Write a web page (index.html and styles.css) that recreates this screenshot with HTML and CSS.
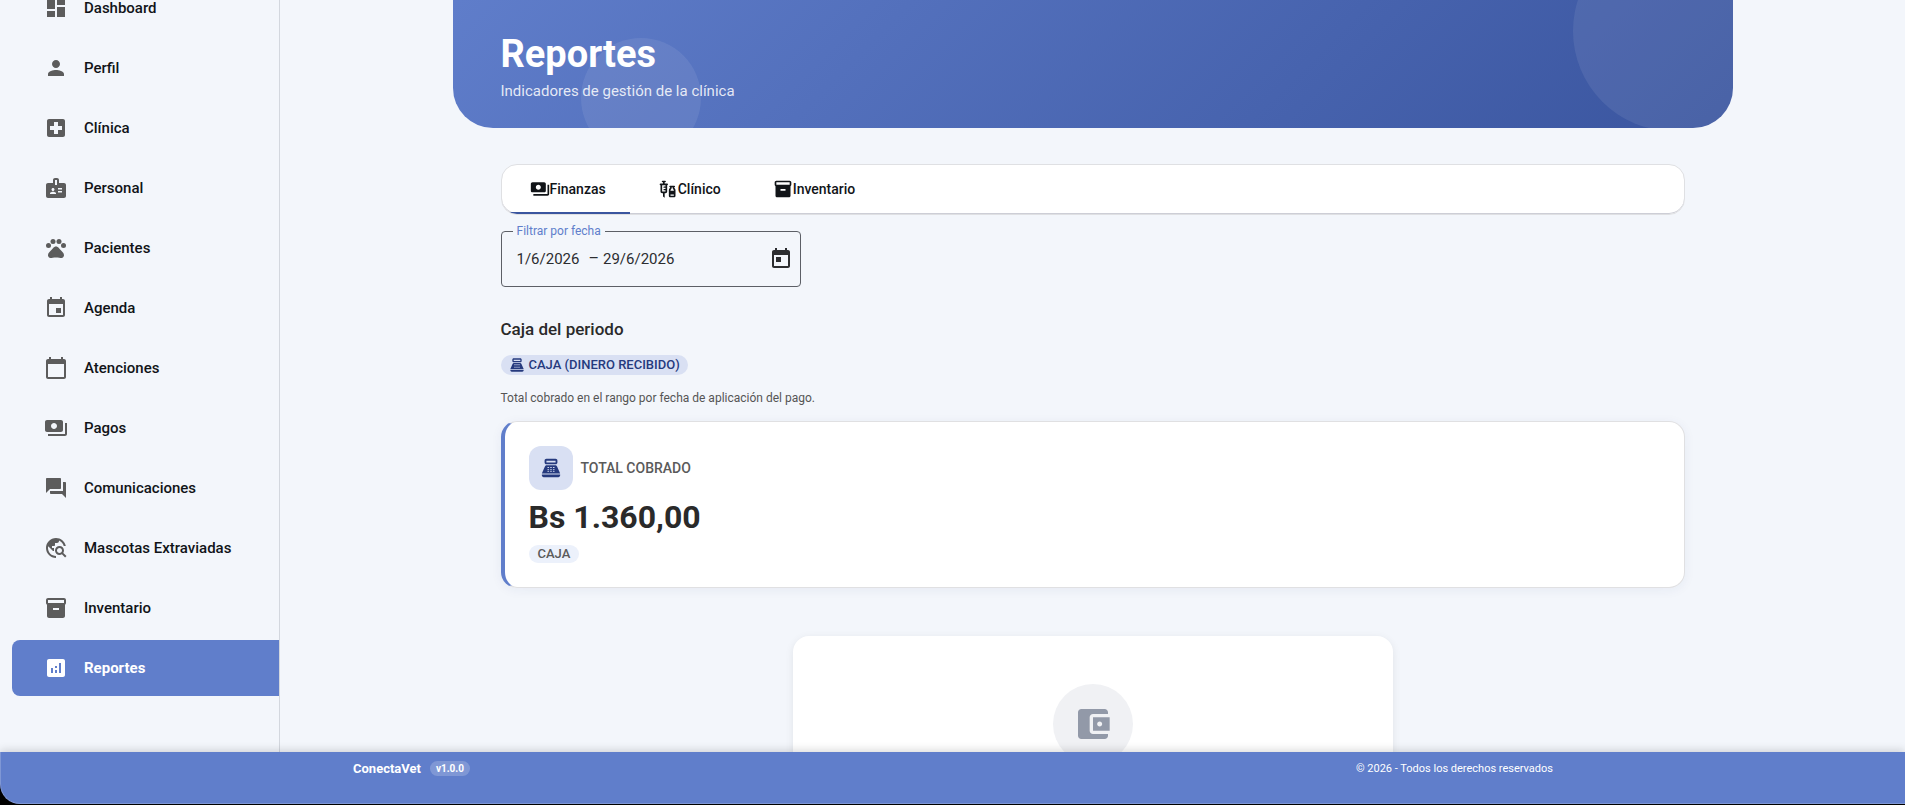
FILE: index.html
```html
<!DOCTYPE html>
<html lang="es">
<head>
<meta charset="utf-8">
<title>ConectaVet - Reportes</title>
<link rel="stylesheet" href="styles.css">
</head>
<body>
<svg class="sprite" aria-hidden="true">
  <symbol id="i-dashboard" viewBox="0 0 24 24"><path d="M3 13h8V3H3v10zm0 8h8v-6H3v6zm10 0h8V11h-8v10zm0-18v6h8V3h-8z"/></symbol>
  <symbol id="i-person" viewBox="0 0 24 24"><path d="M12 12c2.210 0 4-1.790 4-4s-1.790-4-4-4-4 1.790-4 4 1.790 4 4 4zm0 2c-2.670 0-8 1.340-8 4v2h16v-2c0-2.660-5.330-4-8-4z"/></symbol>
  <symbol id="i-hospital" viewBox="0 0 24 24"><path d="M19 3H5c-1.100 0-1.990.9-1.990 2L3 19c0 1.100.9 2 2 2h14c1.100 0 2-.9 2-2V5c0-1.100-.9-2-2-2zm-1 11h-4v4h-4v-4H6v-4h4V6h4v4h4v4z"/></symbol>
  <symbol id="i-badge" viewBox="0 0 24 24"><path fill-rule="evenodd" d="M20 7h-5V4c0-1.100-.9-2-2-2h-2c-1.100 0-2 .9-2 2v3H4c-1.100 0-2 .9-2 2v11c0 1.100.9 2 2 2h16c1.100 0 2-.9 2-2V9c0-1.100-.9-2-2-2zM9 12c.83 0 1.500.67 1.500 1.500S9.830 15 9 15s-1.500-.67-1.500-1.500S8.170 12 9 12zm3 6H6v-.75c0-1 2-1.500 3-1.500s3 .5 3 1.500V18zm1-9h-2V4h2v5zm5 7.500h-4V15h4v1.500zm0-3h-4V12h4v1.500z"/></symbol>
  <symbol id="i-pets" viewBox="0 0 24 24"><circle cx="4.500" cy="9.500" r="2.500"/><circle cx="9" cy="5.500" r="2.500"/><circle cx="15" cy="5.500" r="2.500"/><circle cx="19.500" cy="9.500" r="2.500"/><path d="M17.340 14.860c-.87-1.020-1.600-1.890-2.480-2.910-.46-.54-1.050-1.080-1.750-1.320-.11-.04-.22-.07-.33-.09-.25-.04-.52-.04-.78-.04s-.53 0-.79.05c-.11.02-.22.05-.33.09-.7.24-1.280.78-1.750 1.320-.87 1.020-1.600 1.890-2.480 2.910-1.310 1.310-2.920 2.760-2.620 4.790.29 1.020 1.020 2.030 2.330 2.320.73.15 3.060-.44 5.540-.44h.18c2.480 0 4.810.58 5.540.44 1.310-.29 2.040-1.310 2.330-2.320.31-2.040-1.300-3.490-2.610-4.800z"/></symbol>
  <symbol id="i-event" viewBox="0 0 24 24"><path d="M17 12h-5v5h5v-5zM16 1v2H8V1H6v2H5c-1.110 0-1.990.9-1.990 2L3 19c0 1.100.89 2 2 2h14c1.100 0 2-.9 2-2V5c0-1.100-.9-2-2-2h-1V1h-2zm3 18H5V8h14v11z"/></symbol>
  <symbol id="i-calendar" viewBox="0 0 24 24"><path d="M20 3h-1V1h-2v2H7V1H5v2H4c-1.100 0-2 .9-2 2v16c0 1.100.9 2 2 2h16c1.100 0 2-.9 2-2V5c0-1.100-.9-2-2-2zm0 18H4V8h16v13z"/></symbol>
  <symbol id="i-payments" viewBox="0 0 24 24"><path d="M19 14V6c0-1.100-.9-2-2-2H3c-1.100 0-2 .9-2 2v8c0 1.100.9 2 2 2h14c1.100 0 2-.9 2-2zm-9-1c-1.660 0-3-1.340-3-3s1.340-3 3-3 3 1.340 3 3-1.340 3-3 3zm13-6v11c0 1.100-.9 2-2 2H4v-2h17V7h2z"/></symbol>
  <symbol id="i-forum" viewBox="0 0 24 24"><path d="M21 6h-2v9H6v2c0 .55.45 1 1 1h11l4 4V7c0-.55-.45-1-1-1zm-4 6V3c0-.55-.45-1-1-1H3c-.55 0-1 .45-1 1v14l4-4h10c.55 0 1-.45 1-1z"/></symbol>
  <symbol id="i-travel" viewBox="0 0 24 24"><path d="M19.300 16.900c.4-.7.7-1.500.7-2.400 0-2.500-2-4.500-4.500-4.500S11 12 11 14.500s2 4.500 4.500 4.500c.9 0 1.700-.3 2.400-.7l3.200 3.200 1.400-1.400-3.200-3.200zm-3.800.1c-1.400 0-2.500-1.100-2.500-2.500s1.100-2.500 2.500-2.500 2.500 1.100 2.500 2.500-1.100 2.500-2.500 2.500zM12 20v2C6.480 22 2 17.520 2 12S6.480 2 12 2c4.840 0 8.870 3.440 9.800 8h-2.070c-.64-2.460-2.400-4.470-4.730-5.410V5c0 1.100-.9 2-2 2h-2v2c0 .55-.45 1-1 1H8v2h2v3H9l-4.790-4.790C4.080 10.790 4 11.380 4 12c0 4.410 3.590 8 8 8z"/></symbol>
  <symbol id="i-inventory" viewBox="0 0 24 24"><path d="M20 2H4c-1 0-2 .9-2 2v3.010c0 .72.43 1.340 1 1.690V20c0 1.100 1.100 2 2 2h14c.9 0 2-.9 2-2V8.700c.57-.35 1-.97 1-1.690V4c0-1.100-1-2-2-2zm-5 12H9v-2h6v2zm5-7H4V4h16v3z"/></symbol>
  <symbol id="i-analytics" viewBox="0 0 24 24"><path d="M19 3H5c-1.100 0-2 .9-2 2v14c0 1.100.9 2 2 2h14c1.100 0 2-.9 2-2V5c0-1.100-.9-2-2-2zM9 17H7v-5h2v5zm4 0h-2v-3h2v3zm0-5h-2v-2h2v2zm4 5h-2V7h2v10z"/></symbol>
  <symbol id="i-vaccines" viewBox="0 0 24 24"><path d="M11 5.500H8V4h.5c.55 0 1-.45 1-1s-.45-1-1-1h-3c-.55 0-1 .45-1 1s.45 1 1 1H6v1.500H3c-.55 0-1 .45-1 1s.45 1 1 1V15c0 1.100.9 2 2 2h1v4l2 1.500V17h1c1.100 0 2-.9 2-2V7.500c.55 0 1-.45 1-1s-.45-1-1-1zM9 9H7.250c-.41 0-.75.34-.75.750s.34.750.750.750H9V12H7.250c-.41 0-.75.340-.75.750s.34.750.750.750H9V15H5V7.500h4V9zm10.500 1.500V10c.55 0 1-.45 1-1s-.45-1-1-1h-5c-.55 0-1 .45-1 1s.45 1 1 1v.5c0 .5-1.500 1.160-1.500 3V20c0 1.100.9 2 2 2h4c1.100 0 2-.9 2-2v-6.500c0-1.840-1.500-2.500-1.500-3zm-3 0V10h1v.5c0 1.600 1.500 2 1.500 3v.5h-4v-.500c0-1 1.500-1.400 1.500-3zM15 20v-1.500h4V20h-4z"/></symbol>
  <symbol id="i-today" viewBox="0 0 24 24"><path d="M19 3h-1V1h-2v2H8V1H6v2H5c-1.110 0-1.990.9-1.990 2L3 19c0 1.100.89 2 2 2h14c1.100 0 2-.9 2-2V5c0-1.100-.9-2-2-2zm0 16H5V8h14v11zM7 10h5v5H7z"/></symbol>
  <symbol id="i-register" viewBox="0 0 24 24"><path d="M17 2H7c-1.100 0-2 .9-2 2v2c0 1.100.9 2 2 2h10c1.100 0 2-.9 2-2V4c0-1.100-.9-2-2-2zm0 4H7V4h10v2zm3 16H4c-1.100 0-2-.9-2-2v-1h20v1c0 1.100-.9 2-2 2zM18.530 10.190C18.210 9.470 17.490 9 16.700 9H7.300c-.79 0-1.510.470-1.830 1.190L2 18h20l-3.470-7.810zM9.500 16h-1c-.28 0-.5-.22-.5-.5s.22-.5.5-.5h1c.28 0 .5.22.5.5s-.22.5-.5.5zm0-2h-1c-.28 0-.5-.22-.5-.5s.22-.5.5-.5h1c.28 0 .5.22.5.5s-.22.5-.5.5zm0-2h-1c-.28 0-.5-.22-.5-.5s.22-.5.5-.5h1c.28 0 .5.22.5.5s-.22.5-.5.5zm3 4h-1c-.28 0-.5-.22-.5-.5s.22-.5.5-.5h1c.28 0 .5.22.5.5s-.22.5-.5.5zm0-2h-1c-.28 0-.5-.22-.5-.5s.22-.5.5-.5h1c.28 0 .5.22.5.5s-.22.5-.5.5zm0-2h-1c-.28 0-.5-.22-.5-.5s.22-.5.5-.5h1c.28 0 .5.22.5.5s-.22.5-.5.5zm3 4h-1c-.28 0-.5-.22-.5-.5s.22-.5.5-.5h1c.28 0 .5.22.5.5s-.22.5-.5.5zm0-2h-1c-.28 0-.5-.22-.5-.5s.22-.5.5-.5h1c.28 0 .5.22.5.5s-.22.5-.5.5zm0-2h-1c-.28 0-.5-.22-.5-.5s.22-.5.5-.5h1c.28 0 .5.22.5.5s-.22.5-.5.5z"/></symbol>
  <symbol id="i-wallet" viewBox="0 0 24 24"><path d="M21 18v1c0 1.100-.9 2-2 2H5c-1.110 0-2-.9-2-2V5c0-1.100.89-2 2-2h14c1.100 0 2 .9 2 2v1h-9c-1.110 0-2 .9-2 2v8c0 1.100.89 2 2 2h9zm-9-2h10V8H12v8zm4-2.500c-.83 0-1.500-.67-1.500-1.500s.67-1.500 1.500-1.500 1.500.67 1.500 1.500-.67 1.500-1.500 1.500z"/></symbol>
</svg>
<div class="app">
  <div class="shell">
    <nav class="sidebar" aria-label="Principal">
      <a class="nav-item" href="#"><svg class="icon"><use href="#i-dashboard"/></svg>Dashboard</a>
      <a class="nav-item" href="#"><svg class="icon"><use href="#i-person"/></svg>Perfil</a>
      <a class="nav-item" href="#"><svg class="icon"><use href="#i-hospital"/></svg>Clínica</a>
      <a class="nav-item" href="#"><svg class="icon"><use href="#i-badge"/></svg>Personal</a>
      <a class="nav-item" href="#"><svg class="icon"><use href="#i-pets"/></svg>Pacientes</a>
      <a class="nav-item" href="#"><svg class="icon"><use href="#i-event"/></svg>Agenda</a>
      <a class="nav-item" href="#"><svg class="icon"><use href="#i-calendar"/></svg>Atenciones</a>
      <a class="nav-item" href="#"><svg class="icon"><use href="#i-payments"/></svg>Pagos</a>
      <a class="nav-item" href="#"><svg class="icon"><use href="#i-forum"/></svg>Comunicaciones</a>
      <a class="nav-item" href="#"><svg class="icon"><use href="#i-travel"/></svg>Mascotas Extraviadas</a>
      <a class="nav-item" href="#"><svg class="icon"><use href="#i-inventory"/></svg>Inventario</a>
      <a class="nav-item active" href="#" aria-current="page"><svg class="icon"><use href="#i-analytics"/></svg>Reportes</a>
    </nav>
    <main class="main">
      <div class="page">
        <header class="hero">
          <h1 class="hero-title">Reportes</h1>
          <p class="hero-subtitle">Indicadores de gestión de la clínica</p>
        </header>
        <div class="content">
          <div class="tabs" role="tablist">
            <button class="tab selected" role="tab" aria-selected="true"><svg class="icon"><use href="#i-payments"/></svg>Finanzas</button>
            <button class="tab" role="tab" aria-selected="false"><svg class="icon"><use href="#i-vaccines"/></svg>Clínico</button>
            <button class="tab" role="tab" aria-selected="false"><svg class="icon"><use href="#i-inventory"/></svg>Inventario</button>
          </div>
          <fieldset class="date-field">
            <legend class="date-legend">Filtrar por fecha</legend>
            <div class="date-row">
              <input class="date-input start" type="text" value="1/6/2026" aria-label="Fecha inicial">
              <span class="date-dash">–</span>
              <input class="date-input" type="text" value="29/6/2026" aria-label="Fecha final">
              <button class="date-toggle" aria-label="Abrir calendario"><svg class="icon"><use href="#i-today"/></svg></button>
            </div>
          </fieldset>
          <section class="cash">
            <h2 class="section-title">Caja del periodo</h2>
            <span class="chip"><svg class="icon"><use href="#i-register"/></svg>CAJA (DINERO RECIBIDO)</span>
            <p class="section-note">Total cobrado en el rango por fecha de aplicación del pago.</p>
            <article class="kpi">
              <div class="kpi-head">
                <span class="kpi-icon"><svg class="icon"><use href="#i-register"/></svg></span>
                <span class="kpi-label">TOTAL COBRADO</span>
              </div>
              <div class="kpi-value">Bs 1.360,00</div>
              <span class="kpi-tag">CAJA</span>
            </article>
          </section>
          <section class="empty">
            <span class="empty-icon"><svg class="icon"><use href="#i-wallet"/></svg></span>
          </section>
        </div>
      </div>
    </main>
  </div>
  <footer class="footer">
    <div class="footer-inner">
      <div class="brand">ConectaVet <span class="version">v1.0.0</span></div>
      <div class="rights">© 2026 - Todos los derechos reservados</div>
    </div>
  </footer>
</div>
</body>
</html>
```

FILE: styles.css
```css
:root {
  --primary: #607ecb;
  --primary-dark: #3a559f;
  --navy: #263a7e;
  --tint: #d9e0f3;
  --surface: #f3f6fb;
}

* {
  box-sizing: border-box;
}

body {
  margin: 0;
  background: #000;
  color: #111418;
  font-family: Roboto, "Liberation Sans", sans-serif;
  font-size: 14px;
}

h1, h2, p {
  margin: 0;
}

.sprite {
  display: none;
}

.icon {
  display: block;
  flex: none;
  width: 24px;
  height: 24px;
  fill: currentColor;
}

.app {
  display: flex;
  flex-direction: column;
  height: 100vh;
  padding-bottom: 1px;
  overflow: hidden;
}

.shell {
  display: flex;
  flex: 1;
  min-height: 0;
  background: var(--surface);
}

.sidebar {
  display: flex;
  flex: none;
  flex-direction: column;
  justify-content: flex-end;
  gap: 4px;
  width: 280px;
  padding: 0 0 56px 12px;
  border-right: 1px solid #d3d7de;
  overflow: hidden;
}

.nav-item {
  display: flex;
  flex: none;
  align-items: center;
  gap: 16px;
  height: 56px;
  padding-left: 32px;
  border-radius: 8px 0 0 8px;
  color: #111418;
  font-size: 15px;
  font-weight: 500;
  text-decoration: none;
}

.nav-item .icon {
  color: #5c5c5c;
}

.nav-item.active {
  background: var(--primary);
  color: #fff;
  font-weight: 700;
}

.nav-item.active .icon {
  color: #fff;
}

.main {
  flex: 1;
  min-width: 0;
  overflow: hidden;
}

.page {
  max-width: 1280px;
  margin: -32px auto 0;
}

.hero {
  position: relative;
  padding: 62px 48px 24px;
  border-radius: 0 0 40px 40px;
  background: linear-gradient(135deg, var(--primary) 0%, var(--primary-dark) 100%);
  color: #fff;
  overflow: hidden;
}

.hero::before,
.hero::after {
  content: "";
  position: absolute;
  border-radius: 50%;
  background: rgba(255, 255, 255, 0.08);
}

.hero::before {
  top: -37px;
  right: -40px;
  width: 200px;
  height: 200px;
}

.hero::after {
  bottom: -30px;
  left: 10%;
  width: 120px;
  height: 120px;
}

.hero-title {
  font-size: 38px;
  font-weight: 700;
  line-height: 48px;
}

.hero-subtitle {
  padding: 3px 0;
  color: rgba(255, 255, 255, 0.85);
  font-size: 15px;
  line-height: 20px;
}

.content {
  padding: 36px 48px 0;
}

.tabs {
  display: flex;
  border: 1px solid #dfe0e3;
  border-radius: 16px;
  background: #fff;
  box-shadow: inset 0 -1px 0 #cdced6;
  overflow: hidden;
}

.tab {
  display: flex;
  align-items: center;
  height: 49px;
  padding: 0 24px 0 28px;
  border: 0;
  border-bottom: 2px solid transparent;
  background: none;
  color: #111418;
  font: 500 14px/20px Roboto, "Liberation Sans", sans-serif;
}

.tab .icon {
  width: 20px;
  height: 20px;
}

.tab.selected {
  border-bottom-color: #3a559f;
}

.date-field {
  width: 300px;
  margin: 10px 0 0;
  padding: 0 7px 0 11px;
  border: 1px solid #5c5f66;
  border-radius: 4px;
}

.date-legend {
  padding: 0 4px;
  color: var(--primary);
  font-size: 12px;
  line-height: 12px;
}

.date-row {
  display: flex;
  align-items: center;
  height: 49px;
  padding: 0 0 6px 4px;
}

.date-input {
  width: 80px;
  padding: 0;
  border: 0;
  background: none;
  color: #2c2d30;
  font: 400 15px/24px Roboto, "Liberation Sans", sans-serif;
}

.date-input.start {
  width: 72px;
}

.date-dash {
  padding-right: 4px;
  color: #2c2d30;
  font-size: 16px;
}

.date-toggle {
  margin-left: auto;
  padding: 0;
  border: 0;
  background: none;
  color: #2c2d30;
}

.cash {
  padding-top: 32px;
}

.section-title {
  color: #2a2a2a;
  font-size: 17px;
  font-weight: 500;
  line-height: 20px;
}

.chip {
  display: flex;
  align-items: center;
  gap: 4px;
  width: fit-content;
  margin-top: 16px;
  padding: 0 8px;
  border-radius: 10px;
  background: var(--tint);
  color: var(--navy);
  font-size: 13px;
  font-weight: 500;
  line-height: 20px;
}

.chip .icon {
  width: 16px;
  height: 16px;
}

.section-note {
  padding: 13px 0;
  color: #555;
  font-size: 12px;
  line-height: 20px;
}

.kpi {
  padding: 24px;
  border: 1px solid #e0e0e2;
  border-left: 4px solid var(--primary);
  border-radius: 16px;
  background: #fff;
  box-shadow: 0 2px 12px rgba(38, 58, 126, 0.06);
}

.kpi-head {
  display: flex;
  align-items: center;
  gap: 8px;
}

.kpi-icon {
  display: grid;
  place-items: center;
  width: 44px;
  height: 44px;
  border-radius: 12px;
  background: var(--tint);
  color: var(--navy);
}

.kpi-icon .icon {
  width: 22px;
  height: 22px;
}

.kpi-label {
  color: #5a5a5a;
  font-size: 14px;
  font-weight: 500;
}

.kpi-value {
  padding: 7px 0 8px;
  color: #2a2a2a;
  font-size: 32px;
  font-weight: 700;
  line-height: 40px;
}

.kpi-tag {
  display: block;
  width: fit-content;
  padding: 0 9px;
  border-radius: 9px;
  background: #ecf1fb;
  color: #5a5a5a;
  font-size: 13px;
  font-weight: 500;
  line-height: 18px;
}

.empty {
  display: flex;
  justify-content: center;
  width: 600px;
  max-width: 100%;
  margin: 48px auto 0;
  padding: 48px;
  border-radius: 16px;
  background: #fff;
  box-shadow: 0 2px 8px rgba(0, 0, 0, 0.08);
}

.empty-icon {
  display: grid;
  place-items: center;
  width: 80px;
  height: 80px;
  border-radius: 50%;
  background: #f0f1f4;
  color: #9299a8;
}

.empty-icon .icon {
  width: 40px;
  height: 40px;
}

.footer {
  position: relative;
  flex: none;
  height: 52px;
  padding-top: 6px;
  border-bottom: 1px solid #7f97d5;
  border-left: 1px solid #7f97d5;
  border-bottom-left-radius: 20px;
  background: var(--primary);
  box-shadow: 0 -2px 8px rgba(0, 0, 0, 0.15);
  color: #fff;
}

.footer-inner {
  display: flex;
  align-items: center;
  justify-content: space-between;
  max-width: 1200px;
  height: 20px;
  margin: 0 auto;
}

.brand {
  display: flex;
  align-items: center;
  gap: 9px;
  font-size: 13px;
  font-weight: 700;
}

.version {
  padding: 0 6px;
  border-radius: 8px;
  background: rgba(255, 255, 255, 0.2);
  font-size: 10px;
  font-weight: 700;
  line-height: 15px;
}

.rights {
  font-size: 11px;
}
```
